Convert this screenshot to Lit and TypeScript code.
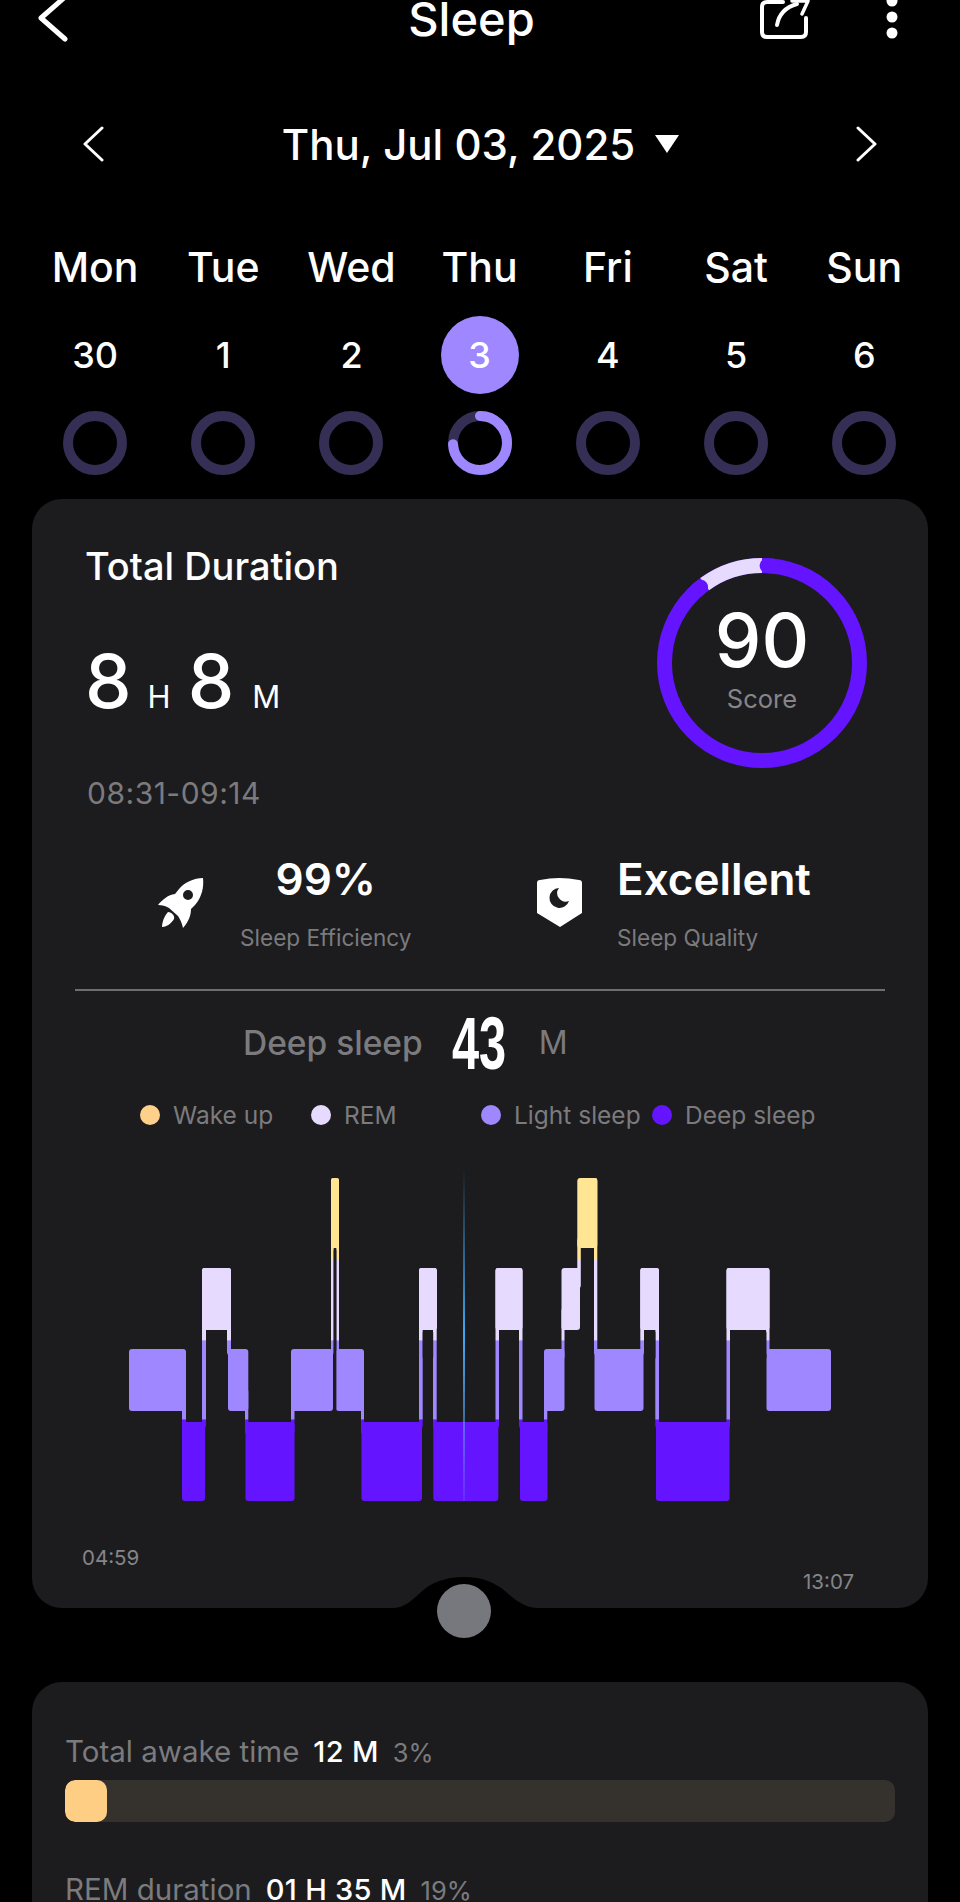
import { LitElement, html, css, svg } from "lit";
import { customElement } from "lit/decorators.js";

const DAYS = [
  ["Mon", "30"], ["Tue", "1"], ["Wed", "2"], ["Thu", "3"],
  ["Fri", "4"], ["Sat", "5"], ["Sun", "6"],
];

const LEGEND = [
  ["Wake up", "#FFD08A", 171],
  ["REM", "#E6DAFF", 170],
  ["Light sleep", "#9E87FF", 171],
  ["Deep sleep", "#6414FF", 170],
] as const;

// Filled blocks of the hypnogram: x, y, w, h in chart units.
const W = 1177, R = 1267, L = 1348, LB = 1410, D = 1423, DB = 1500;
const BLOCKS: number[][] = [
  [129, L, 57, LB - L],
  [182, L + 40, 4, D - L - 30],
  [182, D - 2, 23, DB - D + 2],
  [202, R, 29, 62],
  [202, R, 4, D - R + 4],
  [227, R, 4, L - R + 6],
  [228, L, 20.3, LB - L],
  [245, L + 40, 3.3, D - L - 30],
  [245.5, D - 2, 49, DB - D + 2],
  [291, L, 42, LB - L],
  [291, L + 40, 3.5, D - L - 30],
  [331, W, 8, 70],
  [331, W, 2.7, L - W + 6],
  [336.3, W, 2.7, L - W + 6],
  [336, L, 28, LB - L],
  [361, L + 40, 3, D - L - 30],
  [361.5, D - 2, 60.5, DB - D + 2],
  [419, R, 18, 62],
  [419, R, 3.7, D - R + 4],
  [433, R, 3.7, D - R + 4],
  [433.3, D - 2, 65, DB - D + 2],
  [495.5, R, 27, 62],
  [495.5, R, 3.5, D - R + 4],
  [519, R, 3.5, D - R + 4],
  [520, D - 2, 27.5, DB - D + 2],
  [544, L + 30, 3.3, D - L - 20],
  [544, L, 20.5, LB - L],
  [561.5, R + 40, 3, L - R - 30],
  [561.5, R, 18.5, 62],
  [577.3, W + 60, 3.5, R - W - 40],
  [577.3, W, 20, 70],
  [594, W, 3.3, L - W + 6],
  [594.5, L, 49, LB - L],
  [640.3, R, 18.7, 62],
  [640.3, R, 3.7, L - R + 6],
  [655.3, R, 3.7, D - R + 4],
  [656, D - 2, 73.5, DB - D + 2],
  [726.5, R, 3.5, D - R + 4],
  [726.5, R, 43, 62],
  [766, R, 3.5, L - R + 6],
  [766.5, L, 64.5, LB - L],
];

// Rounded cut-outs that shape the inside of the arches.
const NOTCHES: number[][] = [
  [206, 1329, 21, 30],
  [422.7, 1329, 10.5, 30],
  [499, 1329, 20, 30],
  [644, 1329, 11.5, 30],
  [730, 1329, 36.5, 30],
  [581, 1247, 13, 50],
  [333.6, 1247, 2.8, 163],
];

@customElement("app-root")
export class AppRoot extends LitElement {
  static styles = css`
    :host {
      display: block;
      width: 960px;
      height: 1902px;
      overflow: hidden;
      background: #000;
      color: #fff;
      font-family: Inter, "Liberation Sans", sans-serif;
    }
    svg { display: block; }
    .topbar {
      height: 44px;
      display: grid;
      grid-template-columns: 1fr auto 1fr;
      align-items: center;
      padding: 0 62px 0 36px;
    }
    .title {
      font-size: 47px;
      line-height: 44px;
      font-weight: 500;
      margin-top: -6px;
      margin-left: 9px;
    }
    .actions {
      display: flex;
      justify-content: flex-end;
      align-items: center;
      gap: 75px;
    }
    .datebar {
      margin-top: 72px;
      height: 56px;
      padding: 0 82px;
      display: flex;
      align-items: center;
      justify-content: space-between;
    }
    .date {
      display: flex;
      align-items: center;
      gap: 20px;
      font-size: 42px;
      font-weight: 500;
      margin-left: 1px;
    }
    .week {
      margin-top: 68px;
      padding: 0 31px;
      display: grid;
      grid-template-columns: repeat(7, 128.2px);
      justify-items: center;
    }
    .dayname {
      font-size: 41px;
      line-height: 54px;
      font-weight: 500;
    }
    .daynum {
      width: 78px;
      height: 78px;
      margin-top: 22px;
      border-radius: 50%;
      display: flex;
      align-items: center;
      justify-content: center;
      font-size: 36px;
      font-weight: 500;
    }
    .daynum.on { background: #9E87FF; }
    .ring { margin-top: 17px; }
    .card {
      position: relative;
      margin: 24px 32px 0;
      height: 1109px;
      border-radius: 30px;
      background: #1C1C1E;
      box-sizing: border-box;
      padding: 44px 0 0 0;
    }
    .summary {
      display: flex;
      justify-content: space-between;
      padding: 0 61px 0 53px;
    }
    .card-title {
      font-size: 38px;
      line-height: 46px;
      font-weight: 500;
    }
    .duration {
      display: flex;
      align-items: baseline;
      margin-top: 50px;
      height: 84px;
    }
    .big { font-size: 74px; line-height: 84px; font-weight: 500; }
    .unit { font-size: 31px; font-weight: 400; margin: 0 16px 0 18px; }
    .unit.h { margin: 0 17px 0 16px; }
    .span {
      margin-top: 53px;
      margin-left: 2px;
      font-size: 30px;
      letter-spacing: 0.5px;
      line-height: 34px;
      color: #7B7B7E;
    }
    .score {
      position: relative;
      width: 210px;
      height: 210px;
      margin-top: 15px;
    }
    .score-text {
      position: absolute;
      inset: 0;
      display: flex;
      flex-direction: column;
      align-items: center;
    }
    .score-num { font-size: 74px; line-height: 84px; font-weight: 500; margin-top: 40px; }
    .score-label { font-size: 25.5px; line-height: 30px; color: #85858A; margin-top: 2px; }
    .metrics {
      display: flex;
      margin-top: 44.6px;
      padding-left: 126px;
    }
    .metric { display: flex; }
    .metric.eff { width: 379px; }
    .metric .ico { margin-top: 22px; }
    .metric-body {
      display: flex;
      flex-direction: column;
      align-items: center;
    }
    .eff .metric-body { margin-left: 36px; }
    .qual .metric-body { margin-left: 35px; align-items: flex-start; }
    .metric-val {
      font-size: 44px;
      line-height: 48px;
      font-weight: 600;
    }
    .metric-label {
      margin-top: 21px;
      font-size: 22.6px;
      line-height: 28px;
      color: #7B7B7E;
    }
    .rule {
      margin: 37px 43px 0;
      height: 2px;
      background: #6E6E72;
    }
    .stage {
      display: flex;
      align-items: center;
      height: 80px;
      margin-top: 12px;
      padding-left: 211px;
      color: #7B7B7E;
      font-size: 33.5px;
      font-weight: 500;
    }
    .stage-num {
      color: #fff;
      font-family: "Liberation Sans", sans-serif;
      font-size: 75px;
      font-weight: 700;
      width: 56px;
      margin-left: 29px;
      transform: scaleX(0.65);
      transform-origin: left center;
    }
    .stage-unit { font-size: 32px; font-weight: 400; margin-left: 31px; }
    .legend {
      display: flex;
      height: 40px;
      align-items: center;
      margin-top: 12px;
      padding-left: 108px;
      font-size: 24.5px;
      color: #7B7B7E;
      white-space: nowrap;
    }
    .legend-item { display: flex; align-items: center; gap: 13px; }
    .dot { width: 20px; height: 20px; border-radius: 50%; flex: none; }
    .chart { margin-top: 31px; }
    .stamps {
      position: relative;
      height: 80px;
      color: #85858A;
      font-size: 20.5px;
    }
    .stamp-start { position: absolute; left: 50px; top: 34px; }
    .stamp-end { position: absolute; left: 771px; top: 58px; }
    .notch {
      position: absolute;
      left: 322px;
      bottom: -1px;
    }
    .knob {
      position: absolute;
      left: 405px;
      bottom: -30px;
      width: 54px;
      height: 54px;
      border-radius: 50%;
      background: #77777E;
    }
    .card.lower {
      margin-top: 74px;
      height: 300px;
      padding: 51px 33px 0;
    }
    .row-head {
      display: flex;
      align-items: baseline;
      font-size: 29.5px;
      line-height: 36px;
      color: #7B7B7E;
    }
    .row-head b {
      color: #fff;
      font-size: 29px;
      font-weight: 500;
      letter-spacing: 0.3px;
      margin: 0 14px;
    }
    .row-head small { font-size: 25.5px; }
    .track {
      margin-top: 9px;
      height: 42px;
      border-radius: 10px;
      background: #35312C;
      overflow: hidden;
    }
    .fill { height: 100%; border-radius: 10px; background: #FFCE85; }
    .row2 { margin-top: 48.6px; }
  `;

  private ring(active: boolean) {
    const c = 2 * Math.PI * 27;
    return html`<svg class="ring" width="64" height="64" viewBox="0 0 64 64">
      <circle cx="32" cy="32" r="27" fill="none" stroke="#352F55" stroke-width="10"></circle>
      ${active
        ? svg`<circle cx="32" cy="32" r="27" fill="none" stroke="#9E87FF" stroke-width="10"
            stroke-linecap="round" stroke-dasharray="${c * 0.74} ${c}"
            transform="rotate(-90 32 32)"></circle>`
        : ""}
    </svg>`;
  }

  private arcPath(cx: number, cy: number, r: number, a0: number, a1: number) {
    const p = (a: number) => {
      const t = ((a - 90) * Math.PI) / 180;
      return `${(cx + r * Math.cos(t)).toFixed(2)} ${(cy + r * Math.sin(t)).toFixed(2)}`;
    };
    return `M${p(a0)} A${r} ${r} 0 0 1 ${p(a1)}`;
  }

  private scoreRing() {
    const c = 105, r = 97.5;
    return html`<svg width="210" height="210" viewBox="0 0 210 210" fill="none" stroke-width="15">
      <circle cx="${c}" cy="${c}" r="${r}" stroke="#6414FF"></circle>
      <path d="${this.arcPath(c, c, r, -36, 0)}" stroke="#E6DAFF"></path>
      <path d="${this.arcPath(c, c, r, 3, 6)}" stroke="#6414FF" stroke-linecap="round"></path>
      <path d="${this.arcPath(c, c, r, -42, -39)}" stroke="#6414FF" stroke-linecap="round"></path>
    </svg>`;
  }

  private chart() {
    return html`<svg class="chart" width="895" height="345" viewBox="32 1165 895 345">
      <defs>
        <linearGradient id="levels" gradientUnits="userSpaceOnUse" x1="0" x2="0" y1="${W}" y2="${DB}">
          <stop offset="0.25" stop-color="#FFE594"></stop>
          <stop offset="0.255" stop-color="#E6DAFF"></stop>
          <stop offset="0.5" stop-color="#E6DAFF"></stop>
          <stop offset="0.505" stop-color="#9E87FF"></stop>
          <stop offset="0.745" stop-color="#9E87FF"></stop>
          <stop offset="0.75" stop-color="#6414FF"></stop>
        </linearGradient>
        <linearGradient id="cursor" x1="0" x2="0" y1="0" y2="1">
          <stop offset="0" stop-color="#3FA9F5" stop-opacity="0"></stop>
          <stop offset="0.5" stop-color="#3FA9F5"></stop>
          <stop offset="1" stop-color="#7FB0FF" stop-opacity="0.15"></stop>
        </linearGradient>
      </defs>
      ${BLOCKS.map(
        ([x, y, w, h]) =>
          svg`<rect x="${x}" y="${y}" width="${w}" height="${h}" rx="3" fill="url(#levels)"></rect>`
      )}
      ${NOTCHES.map(
        ([x, y, w, h]) =>
          svg`<rect x="${x}" y="${y}" width="${w}" height="${h}" rx="3" fill="#1C1C1E"></rect>`
      )}
      <rect x="463" y="1168" width="2" height="332" fill="url(#cursor)"></rect>
    </svg>`;
  }

  render() {
    return html`
      <div class="topbar">
        <svg width="40" height="44" viewBox="0 0 40 44" fill="none" stroke="#fff" stroke-width="5" stroke-linecap="round" stroke-linejoin="round">
          <path d="M29 -3 L5 18 L29 39"></path>
        </svg>
        <div class="title">Sleep</div>
        <div class="actions">
          <svg width="52" height="44" viewBox="0 0 52 44" fill="none" stroke="#fff" stroke-width="4" stroke-linecap="round" stroke-linejoin="round">
            <path d="M24 2 H8 Q3 2 3 7 V32 Q3 37 8 37 H42 Q47 37 47 32 V18"></path>
            <path d="M18 25 C20 14 27 7 38 4"></path>
            <path d="M33 1 H49 L43 14" stroke-width="3.5"></path>
          </svg>
          <svg width="12" height="44" viewBox="0 0 12 44" fill="#fff">
            <circle cx="6" cy="1" r="5.5"></circle>
            <circle cx="6" cy="17" r="5.5"></circle>
            <circle cx="6" cy="33" r="5.5"></circle>
          </svg>
        </div>
      </div>

      <div class="datebar">
        <svg width="22" height="36" viewBox="0 0 22 36" fill="none" stroke="#fff" stroke-width="3" stroke-linecap="round" stroke-linejoin="round">
          <path d="M20 2 L3 18 L20 34"></path>
        </svg>
        <div class="date">
          Thu, Jul 03, 2025
          <svg width="24" height="18" viewBox="0 0 24 18" fill="#fff">
            <path d="M0 0 H24 L12 18 Z"></path>
          </svg>
        </div>
        <svg width="22" height="36" viewBox="0 0 22 36" fill="none" stroke="#fff" stroke-width="3" stroke-linecap="round" stroke-linejoin="round">
          <path d="M2 2 L19 18 L2 34"></path>
        </svg>
      </div>

      <div class="week">
        ${DAYS.map(([d]) => html`<div class="dayname">${d}</div>`)}
        ${DAYS.map(([, n]) => html`<div class="daynum ${n === "3" ? "on" : ""}">${n}</div>`)}
        ${DAYS.map(([, n]) => this.ring(n === "3"))}
      </div>

      <section class="card">
        <div class="summary">
          <div>
            <div class="card-title">Total Duration</div>
            <div class="duration">
              <span class="big">8</span><span class="unit h">H</span><span class="big">8</span><span class="unit">M</span>
            </div>
            <div class="span">08:31-09:14</div>
          </div>
          <div class="score">
            ${this.scoreRing()}
            <div class="score-text">
              <div class="score-num">90</div>
              <div class="score-label">Score</div>
            </div>
          </div>
        </div>

        <div class="metrics">
          <div class="metric eff">
            <svg class="ico" width="46" height="52" viewBox="0 0 46 52" fill="#fff" fill-rule="evenodd">
              <path d="M45 1 C46 10 44 20 37 28 L33 32 C33 38 31 44 25 51 C24 46 22 42 20 39 L11 31 C8 29 4 28 0 28 C5 22 10 18 17 17 L21 12 C27 5 36 1 45 1 Z M30 13 A5 5 0 1 0 30 23 A5 5 0 1 0 30 13 Z"></path>
              <path d="M10 35 C14 35 17 39 16 42 C13 47 8 50 4 50 C4 46 6 39 10 35 Z"></path>
            </svg>
            <div class="metric-body">
              <div class="metric-val">99%</div>
              <div class="metric-label">Sleep Efficiency</div>
            </div>
          </div>
          <div class="metric qual">
            <svg class="ico" width="45" height="52" viewBox="0 0 45 52">
              <path fill="#fff" d="M3 3 Q22 -1 42 3 Q45 3 45 6 V36 L23 50 L0 36 V6 Q0 3 3 3 Z"></path>
              <path fill="#1C1C1E" d="M22 11 A10 10 0 1 0 32 24 A8.5 8.5 0 0 1 22 11 Z"></path>
            </svg>
            <div class="metric-body">
              <div class="metric-val">Excellent</div>
              <div class="metric-label">Sleep Quality</div>
            </div>
          </div>
        </div>

        <div class="rule"></div>

        <div class="stage">
          Deep sleep
          <span class="stage-num">43</span>
          <span class="stage-unit">M</span>
        </div>

        <div class="legend">
          ${LEGEND.map(
            ([label, color, width]) => html`<div class="legend-item" style="width:${width}px">
              <span class="dot" style="background:${color}"></span>${label}
            </div>`
          )}
        </div>

        ${this.chart()}

        <div class="stamps">
          <span class="stamp-start">04:59</span>
          <span class="stamp-end">13:07</span>
        </div>

        <svg class="notch" width="220" height="34" viewBox="0 0 220 34" fill="#000">
          <path d="M38 33 C51 33 58 25 66 18 C76 8 91 2 110 2 C129 2 141 8 151 16 C161 25 171 33 185 33 V34 H38 Z"></path>
        </svg>
        <div class="knob"></div>
      </section>

      <section class="card lower">
        <div class="row-head">Total awake time<b>12 M</b><small>3%</small></div>
        <div class="track"><div class="fill" style="width:${(42 / 829) * 100}%"></div></div>
        <div class="row-head row2">REM duration<b>01 H 35 M</b><small>19%</small></div>
      </section>
    `;
  }
}
